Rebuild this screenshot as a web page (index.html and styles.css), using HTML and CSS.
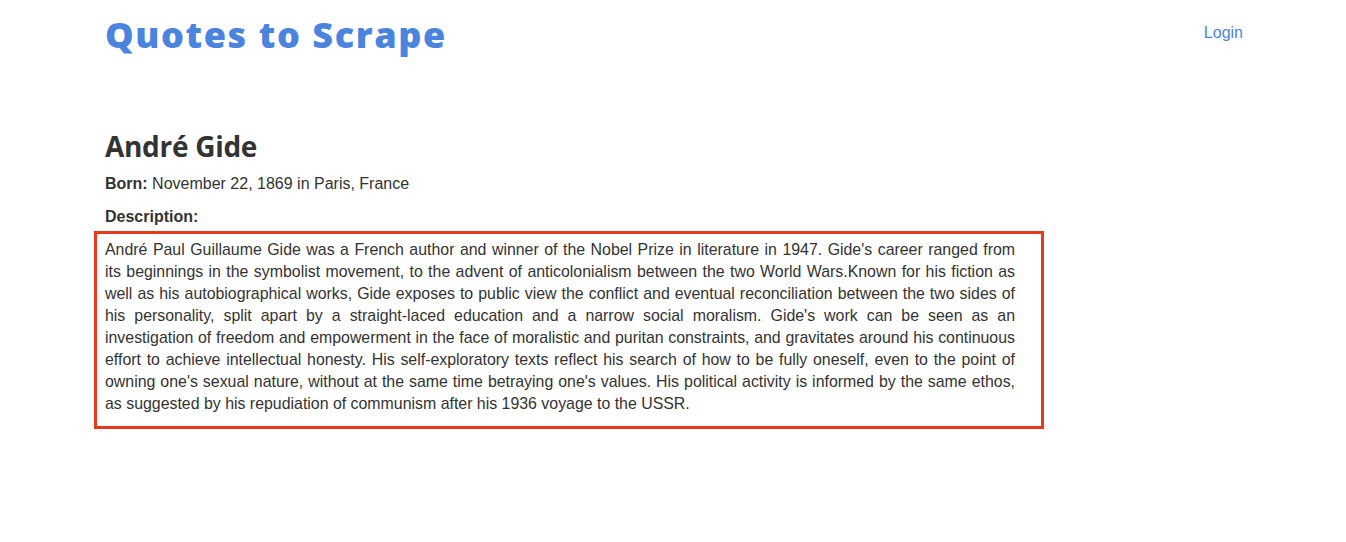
FILE: index.html
```html
<!DOCTYPE html>
<html lang="en">
<head>
<meta charset="utf-8">
<title>Quotes to Scrape</title>
<link rel="stylesheet" href="styles.css">
</head>
<body>
<div class="container">
  <header class="header">
    <h1 class="brand"><a href="#">Quotes to Scrape</a></h1>
    <a class="login" href="#">Login</a>
  </header>
  <main class="author-details">
    <h3 class="author-title">André Gide</h3>
    <p class="born"><strong>Born:</strong> November 22, 1869 in Paris, France</p>
    <p class="desc-label"><strong>Description:</strong></p>
    <div class="author-description">
      <span class="line">André Paul Guillaume Gide was a French author and winner of the Nobel Prize in literature in 1947. Gide's career ranged from</span>
      <span class="line">its beginnings in the symbolist movement, to the advent of anticolonialism between the two World Wars.Known for his fiction as</span>
      <span class="line">well as his autobiographical works, Gide exposes to public view the conflict and eventual reconciliation between the two sides of</span>
      <span class="line">his personality, split apart by a straight-laced education and a narrow social moralism. Gide's work can be seen as an</span>
      <span class="line">investigation of freedom and empowerment in the face of moralistic and puritan constraints, and gravitates around his continuous</span>
      <span class="line">effort to achieve intellectual honesty. His self-exploratory texts reflect his search of how to be fully oneself, even to the point of</span>
      <span class="line">owning one's sexual nature, without at the same time betraying one's values. His political activity is informed by the same ethos,</span>
      <span class="line last">as suggested by his repudiation of communism after his 1936 voyage to the USSR.</span>
    </div>
  </main>
</div>
</body>
</html>
```

FILE: styles.css
```css
* { box-sizing: border-box; }
html, body { margin: 0; padding: 0; background: #fff; }
body {
  font-family: "Liberation Sans", Arial, sans-serif;
  font-size: 16px;
  line-height: 22px;
  color: #333;
  min-height: 542px;
}
a { text-decoration: none; color: #4a84de; }
.container {
  width: 1170px;
  margin: 0 auto;
  padding: 0 15px 60px;
}
.header {
  display: flex;
  justify-content: space-between;
  align-items: flex-start;
}
.brand {
  margin: 15px 0 0 2px;
  font-family: "Open Sans", sans-serif;
  font-weight: 800;
  font-size: 36px;
  line-height: 40px;
  letter-spacing: 1.6px;
}
.brand a { color: #4a84de; }
.login {
  margin-top: 22px;
  font-size: 16px;
  line-height: 22px;
}
.author-details {
  width: 80%;
  margin-top: 74px;
  padding-left: 2px;
}
.author-title {
  margin: 0;
  font-family: "Open Sans", sans-serif;
  font-weight: 700;
  font-size: 28px;
  line-height: 34px;
  letter-spacing: -0.3px;
  color: #333;
}
.born { margin: 10px 0 0; }
.desc-label { margin: 11px 0 0; }
.author-description {
  position: relative;
  margin-top: 11px;
  font-size: 15.9px;
}
.line {
  display: block;
  text-align: justify;
  text-align-last: justify;
}
.line.last {
  text-align: left;
  text-align-last: left;
}
.author-description::after {
  content: "";
  position: absolute;
  top: -8px;
  left: -11px;
  right: -29px;
  bottom: -14px;
  border: 3px solid #e8391d;
  pointer-events: none;
}
```
